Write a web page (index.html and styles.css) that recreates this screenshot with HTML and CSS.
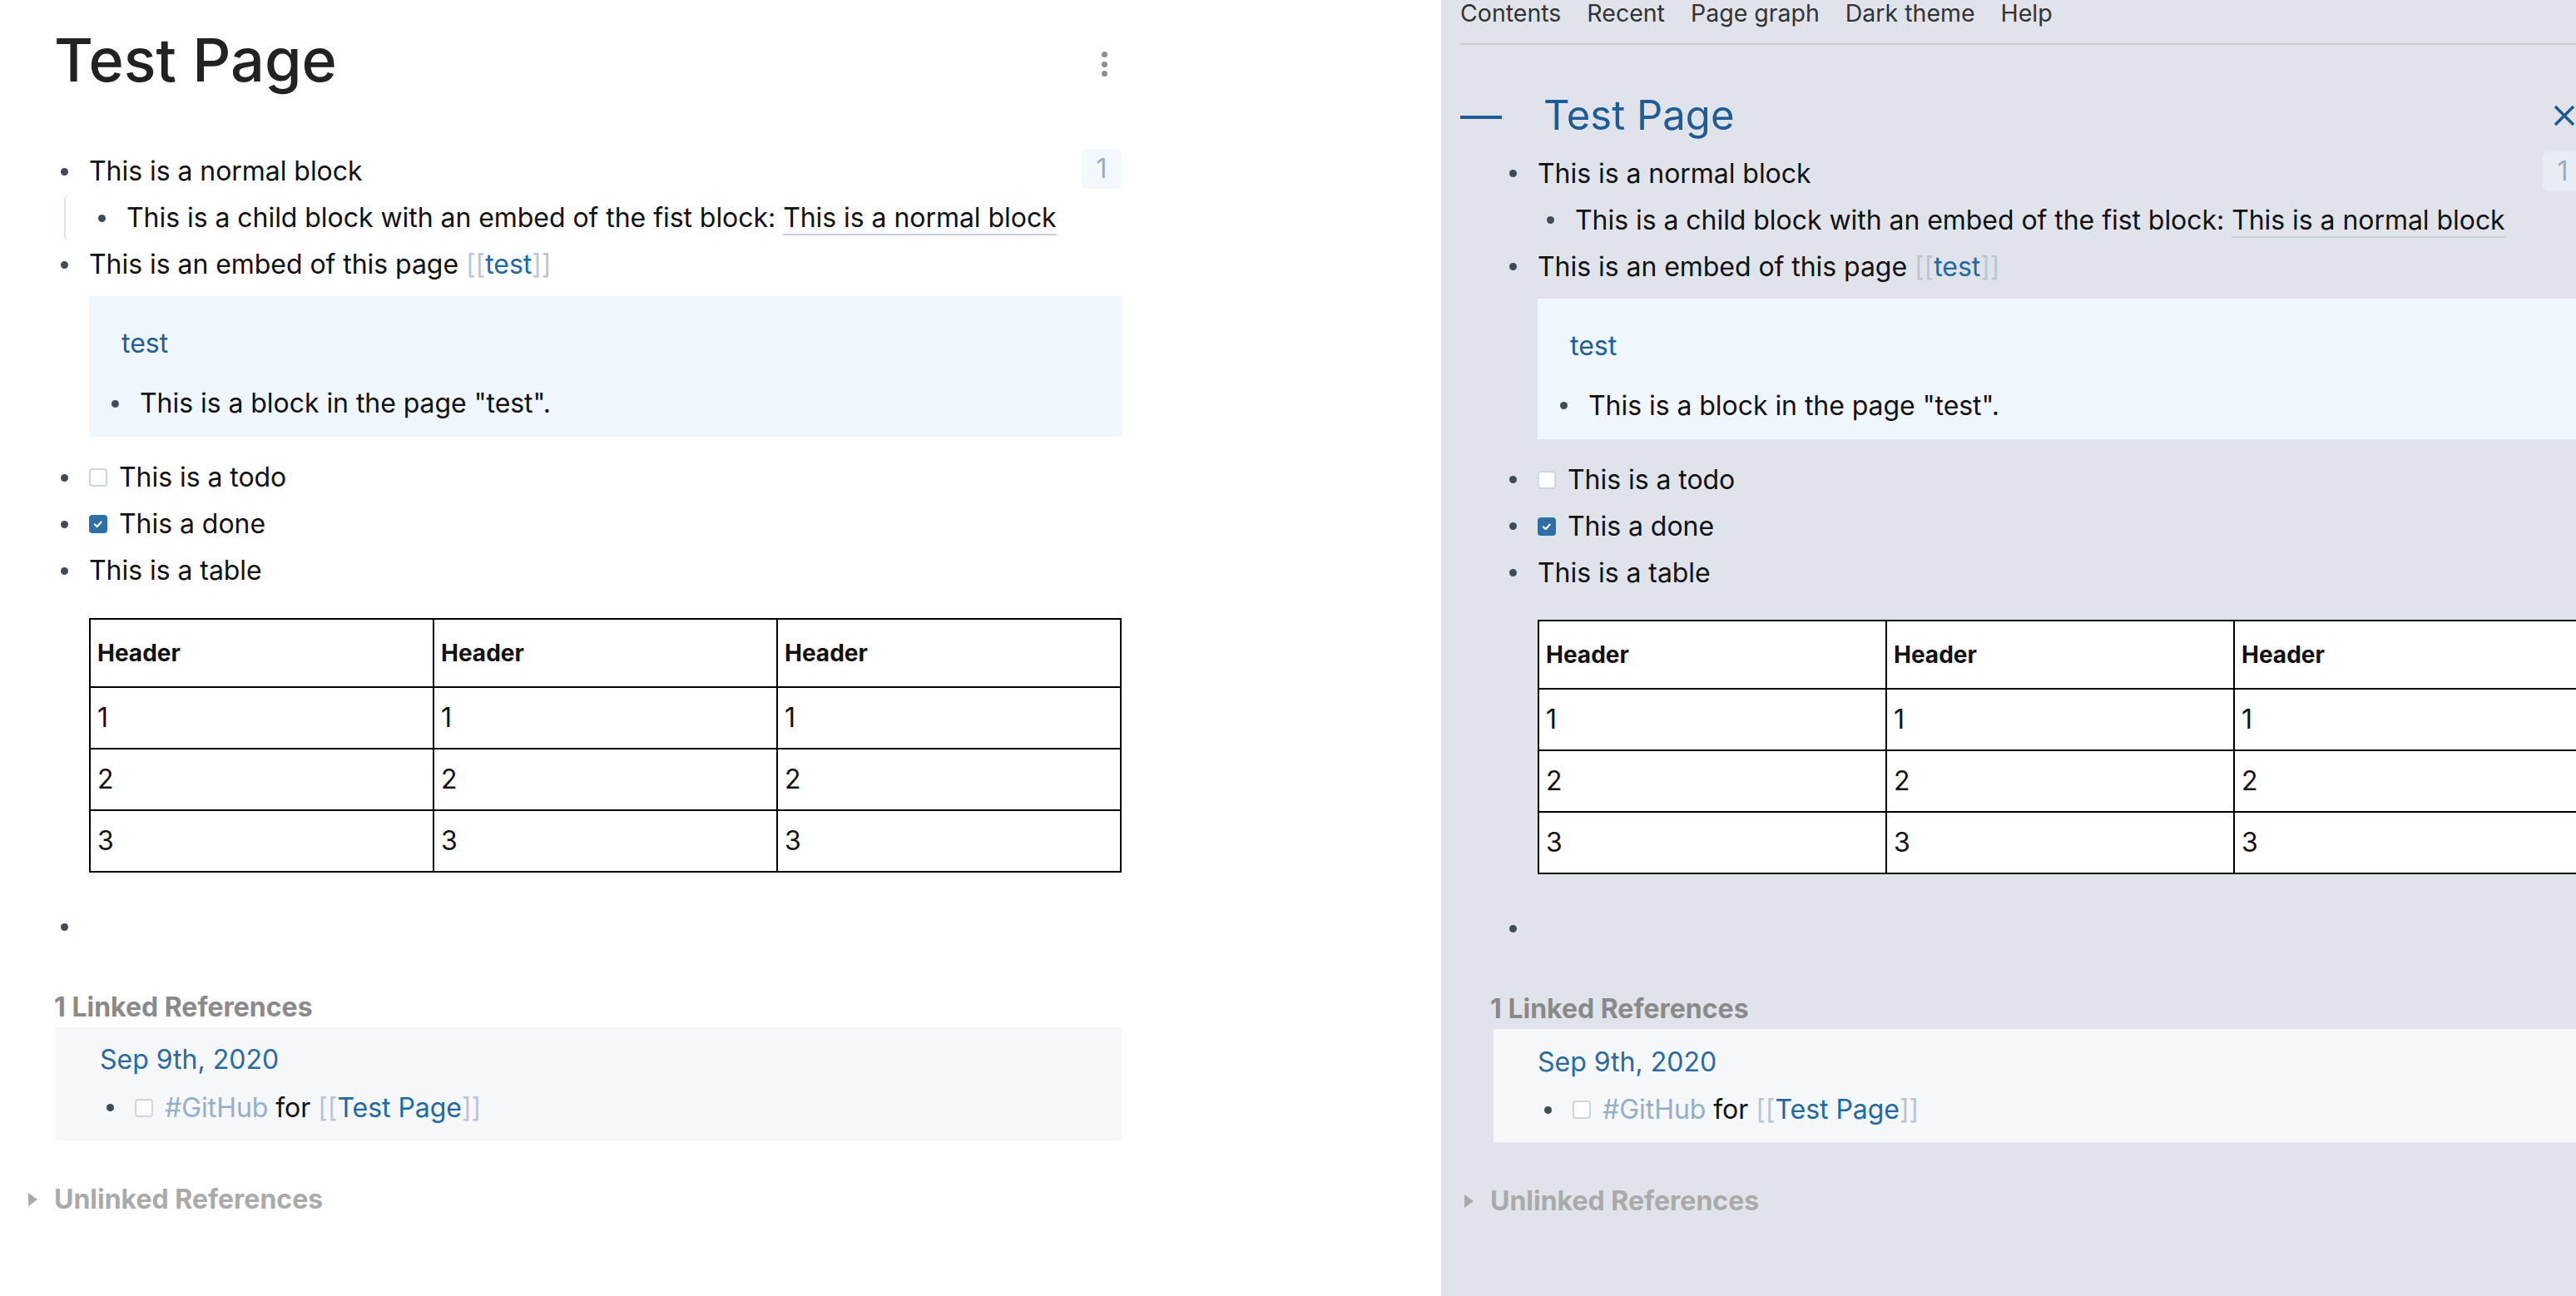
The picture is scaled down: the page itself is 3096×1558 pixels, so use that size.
FILE: index.html
```html
<!DOCTYPE html>
<html lang="en">
<head>
<meta charset="utf-8">
<title>Test Page</title>
<link rel="stylesheet" href="styles.css">
</head>
<body>
<div class="app">
  <main class="main">
    <div class="page page-main">
      <div class="title-row">
        <h1 class="title">Test Page</h1>
        <div class="dots"><span></span><span></span><span></span></div>
      </div>

      <div class="blocks">
        <div class="block">
          <div class="row"><span class="bw"><span class="bullet"></span></span><div class="text">This is a normal block</div><span class="badge">1</span></div>
          <div class="children">
            <div class="row"><span class="bw"><span class="bullet"></span></span><div class="text">This is a child block with an embed of the fist block: <span class="bref">This is a normal block</span></div></div>
          </div>
        </div>
        <div class="block">
          <div class="row"><span class="bw"><span class="bullet"></span></span><div class="text">This is an embed of this page <span class="brk">[[</span><span class="link">test</span><span class="brk">]]</span></div></div>
          <div class="embed">
            <div class="embed-title">test</div>
            <div class="row"><span class="bw"><span class="bullet"></span></span><div class="text">This is a block in the page "test".</div></div>
          </div>
        </div>
        <div class="row"><span class="bw"><span class="bullet"></span></span><div class="text todo"><span class="cb"></span>This is a todo</div></div>
        <div class="row"><span class="bw"><span class="bullet"></span></span><div class="text todo"><span class="cb done"><svg viewBox="0 0 22 22" width="18" height="18"><path d="M6 11.5 L9.5 14.8 L15.5 8" fill="none" stroke="#fff" stroke-width="2.6" stroke-linecap="round" stroke-linejoin="round"/></svg></span>This a done</div></div>
        <div class="row"><span class="bw"><span class="bullet"></span></span><div class="text">This is a table</div></div>
        <table class="tbl">
          <tr><th>Header</th><th>Header</th><th>Header</th></tr>
          <tr><td>1</td><td>1</td><td>1</td></tr>
          <tr><td>2</td><td>2</td><td>2</td></tr>
          <tr><td>3</td><td>3</td><td>3</td></tr>
        </table>
        <div class="row empty"><span class="bw"><span class="bullet"></span></span><div class="text"></div></div>
      </div>

      <div class="refs">
        <div class="refs-head">1 Linked References</div>
        <div class="ref-box">
          <div class="ref-date">Sep 9th, 2020</div>
          <div class="row ref-row"><span class="bw"><span class="bullet"></span></span><div class="text todo"><span class="cb"></span><span class="tag">#GitHub</span>&nbsp;for&nbsp;<span class="brk">[[</span><span class="link">Test Page</span><span class="brk">]]</span></div></div>
        </div>
        <div class="unlinked"><span class="tri"></span>Unlinked References</div>
      </div>
    </div>
  </main>

  <aside class="sidebar">
    <nav class="menu"><span>Contents</span><span>Recent</span><span>Page graph</span><span>Dark theme</span><span>Help</span></nav>
    <div class="menu-rule"></div>
    <div class="side-title-row">
      <span class="dash"></span>
      <h2 class="side-title">Test Page</h2>
      <svg class="close" viewBox="0 0 28 28" width="28" height="28"><path d="M3 3 L25 25 M25 3 L3 25" fill="none" stroke="#1d5a92" stroke-width="3.5"/></svg>
    </div>
    <div class="page page-side">
      <div class="blocks">
        <div class="block">
          <div class="row"><span class="bw"><span class="bullet"></span></span><div class="text">This is a normal block</div><span class="badge">1</span></div>
          <div class="children">
            <div class="row"><span class="bw"><span class="bullet"></span></span><div class="text">This is a child block with an embed of the fist block: <span class="bref">This is a normal block</span></div></div>
          </div>
        </div>
        <div class="block">
          <div class="row"><span class="bw"><span class="bullet"></span></span><div class="text">This is an embed of this page <span class="brk">[[</span><span class="link">test</span><span class="brk">]]</span></div></div>
          <div class="embed">
            <div class="embed-title">test</div>
            <div class="row"><span class="bw"><span class="bullet"></span></span><div class="text">This is a block in the page "test".</div></div>
          </div>
        </div>
        <div class="row"><span class="bw"><span class="bullet"></span></span><div class="text todo"><span class="cb"></span>This is a todo</div></div>
        <div class="row"><span class="bw"><span class="bullet"></span></span><div class="text todo"><span class="cb done"><svg viewBox="0 0 22 22" width="18" height="18"><path d="M6 11.5 L9.5 14.8 L15.5 8" fill="none" stroke="#fff" stroke-width="2.6" stroke-linecap="round" stroke-linejoin="round"/></svg></span>This a done</div></div>
        <div class="row"><span class="bw"><span class="bullet"></span></span><div class="text">This is a table</div></div>
        <table class="tbl">
          <tr><th>Header</th><th>Header</th><th>Header</th></tr>
          <tr><td>1</td><td>1</td><td>1</td></tr>
          <tr><td>2</td><td>2</td><td>2</td></tr>
          <tr><td>3</td><td>3</td><td>3</td></tr>
        </table>
        <div class="row empty"><span class="bw"><span class="bullet"></span></span><div class="text"></div></div>
      </div>

      <div class="refs">
        <div class="refs-head">1 Linked References</div>
        <div class="ref-box">
          <div class="ref-date">Sep 9th, 2020</div>
          <div class="row ref-row"><span class="bw"><span class="bullet"></span></span><div class="text todo"><span class="cb"></span><span class="tag">#GitHub</span>&nbsp;for&nbsp;<span class="brk">[[</span><span class="link">Test Page</span><span class="brk">]]</span></div></div>
        </div>
        <div class="unlinked"><span class="tri"></span>Unlinked References</div>
      </div>
    </div>
  </aside>
</div>
</body>
</html>
```

FILE: styles.css
```css
* { box-sizing: border-box; }
html, body { margin: 0; padding: 0; }
body {
  width: 3096px;
  height: 1558px;
  overflow: hidden;
  background: #fff;
  font-family: Inter, "Noto Sans", sans-serif;
  color: #111;
}
.app { display: flex; height: 1558px; }
.main { flex: 0 0 1732px; background: #fff; }
.sidebar { flex: 0 0 1380px; background: #e0e4ea; }

/* ---------- page ---------- */
.page-main { padding: 28px 0 0 65px; width: 1348px; }
.title-row { display: flex; align-items: flex-start; justify-content: space-between; }
.title { margin: 0; font-size: 72px; line-height: 88px; font-weight: 500; color: #222; }
.dots { display: flex; flex-direction: column; gap: 4.6px; margin: 34px 17px 0 0; }
.dots span { width: 7px; height: 7px; border-radius: 50%; background: #8e8e8e; }

.blocks { margin-left: -3px; margin-top: 62px; }
.row { display: flex; align-items: flex-start; padding: 4px 0; font-size: 32px; line-height: 48px; letter-spacing: -0.05px; }
.bw { flex: 0 0 30px; height: 48px; display: flex; align-items: center; justify-content: center; margin-right: 15px; }
.bullet { width: 9px; height: 9px; border-radius: 50%; background: #3e4c59; }
.text { white-space: nowrap; }
.text.todo { display: flex; align-items: center; }
.children { margin-left: 15px; border-left: 2px solid #dde4ea; border-radius: 6px 0 0 6px; padding-left: 28px; }
.badge {
  margin-left: auto; margin-top: -3px;
  width: 48px; height: 48px; border-radius: 8px;
  background: #f3f8fd; color: #8fb0cc;
  font-size: 32px; line-height: 48px; text-align: center;
}
.bref { border-bottom: 2px solid #c3cfda; }
.brk { color: #b9c6d2; }
.link { color: #2069a3; }
.tag { color: #93b0cb; }

.embed { margin: 10px 0 21px 45px; background: #eff6fd; padding: 29px 0 12px 16px; }
.embed-title { font-size: 32px; line-height: 56px; color: #1f5f99; padding-left: 23px; }
.embed .row { margin-top: 16px; }

.cb {
  flex: none; width: 22px; height: 22px;
  border: 2px solid #cdd6df; border-radius: 4px; background: #fff;
  margin-right: 14px;
  display: flex; align-items: center; justify-content: center;
}
.cb.done { background: #2e6fa8; border-color: #2e6fa8; }

.tbl {
  margin: 28.5px 0 0 45px;
  width: calc(100% - 45px);
  border-collapse: collapse;
  table-layout: fixed;
  background: #fff;
}
.tbl th, .tbl td { border: 2px solid #000; text-align: left; vertical-align: middle; }
.tbl th { font-size: 28px; font-weight: 700; line-height: 48px; padding: 16px 8px; }
.tbl td { font-size: 32px; line-height: 48px; padding: 12px 8px; }
.row.empty { margin-top: 37.5px; }

/* ---------- references ---------- */
.refs { margin-top: 48.5px; }
.refs-head { font-size: 32px; font-weight: 700; line-height: 40px; color: #8a8a8a; }
.ref-box { margin: 4px 0 0 2px; background: #f5f7f9; padding: 15.5px 0 11px 53px; }
.ref-date { font-size: 32px; line-height: 48px; color: #2a6aa3; }
.ref-row { margin: 5.5px 0 0 -3px; font-size: 32px; }
.unlinked {
  margin: 51px 0 0 -31px;
  display: flex; align-items: center;
  font-size: 32px; font-weight: 700; line-height: 40px; color: #aaa;
}
.tri {
  width: 0; height: 0; margin-right: 20px;
  border-left: 11px solid #a9a9a9;
  border-top: 8.5px solid transparent;
  border-bottom: 8.5px solid transparent;
}

/* ---------- sidebar ---------- */
.menu { display: flex; gap: 31px; padding-left: 23px; font-size: 28.5px; line-height: 32px; color: #333; }
.menu-rule { height: 2px; background: #c9ccd1; margin: 20px 0 0 23px; }
.side-title-row { display: flex; align-items: center; margin-top: 55.5px; height: 58px; padding: 0 16px 0 23px; }
.dash { flex: none; width: 50px; height: 4px; background: #1f5c95; margin: 5px 50px 0 0; }
.side-title { margin: 0; font-size: 49px; line-height: 58px; font-weight: 400; color: #1f5c95; }
.close { margin-left: auto; flex: none; }
.page-side { padding-left: 59px; width: 1372px; }
.page-side .blocks { margin-left: 12px; margin-top: 13px; }
.page-side .ref-box { margin-left: 4px; }
.page-side .badge { background: #e8edf3; }
```
